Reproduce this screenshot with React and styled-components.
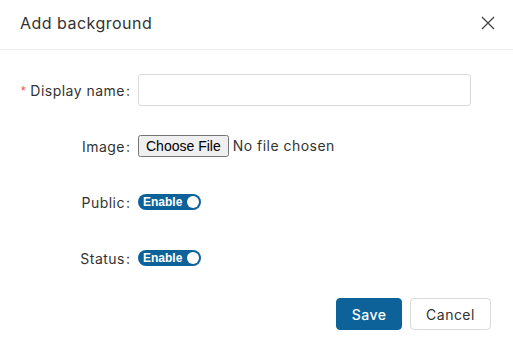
import React from 'react';
import styled, { createGlobalStyle } from 'styled-components';

const GlobalStyle = createGlobalStyle`
  html, body {
    margin: 0;
    padding: 0;
    background: #fff;
  }
  body {
    font-family: Inter, "Open Sans", sans-serif;
    letter-spacing: 0.03em;
    color: #333;
  }
`;

const Modal = styled.div`
  width: 513px;
  height: 361px;
  background: #fff;
  display: flex;
  flex-direction: column;
`;

const Header = styled.div`
  height: 50px;
  box-sizing: border-box;
  border-bottom: 1px solid #eeeeee;
  display: flex;
  align-items: center;
  justify-content: space-between;
  padding: 0 16px 4px 20px;
`;

const Title = styled.div`
  font-size: 16px;
  color: #333;
`;

const CloseButton = styled.button`
  border: 0;
  background: none;
  padding: 0;
  width: 18px;
  height: 18px;
  display: flex;
  align-items: center;
  justify-content: center;
  cursor: pointer;
  color: #444;
`;

const Body = styled.div`
  padding: 24px 0 0 0;
  display: flex;
  flex-direction: column;
  gap: 24px;
`;

const Row = styled.div`
  display: flex;
  align-items: center;
  height: 32px;
`;

const Label = styled.label`
  width: 130px;
  box-sizing: border-box;
  display: flex;
  justify-content: flex-end;
  align-items: center;
  font-size: 14px;
  color: #333;
`;

const Required = styled.span`
  color: #ff4d4f;
  font-size: 13px;
  margin-right: 4px;
  font-family: SimSun, sans-serif;
`;

const Colon = styled.span`
  margin-left: 1px;
  letter-spacing: 0;
`;

const TextInput = styled.input`
  width: 333px;
  height: 32px;
  box-sizing: border-box;
  border: 1px solid #d9d9d9;
  border-radius: 3px;
  margin-left: 8px;
  padding: 4px 11px;
  font: inherit;
  font-size: 14px;
  outline: none;
`;

const FileInput = styled.input`
  margin-left: 8px;
  font-family: inherit;
  letter-spacing: inherit;
  font-size: 14px;
  color: #333;
`;

const Switch = styled.button`
  margin-left: 8px;
  height: 16px;
  width: 63px;
  border: 0;
  border-radius: 8px;
  background: ${({ checked }) => (checked ? '#0d6399' : '#bfbfbf')};
  display: flex;
  align-items: center;
  justify-content: space-between;
  padding: 0 2px 0 5px;
  box-sizing: border-box;
  cursor: pointer;
`;

const SwitchText = styled.span`
  color: #fff;
  font-family: inherit;
  font-size: 12px;
  font-weight: 600;
  letter-spacing: 0;
  line-height: 16px;
`;

const Knob = styled.span`
  width: 12px;
  height: 12px;
  border-radius: 50%;
  background: #fff;
`;

const Footer = styled.div`
  display: flex;
  justify-content: flex-end;
  gap: 8px;
  padding: 0 22px 0 0;
`;

const Button = styled.button`
  height: 32px;
  padding: 0;
  border-radius: 4px;
  font-family: inherit;
  letter-spacing: inherit;
  font-size: 14px;
  font-weight: ${({ primary }) => (primary ? 500 : 400)};
  cursor: pointer;
  border: 1px solid ${({ primary }) => (primary ? '#0d6399' : '#d9d9d9')};
  background: ${({ primary }) => (primary ? '#0d6399' : '#fff')};
  color: ${({ primary }) => (primary ? '#fff' : '#333')};
  width: ${({ primary }) => (primary ? '66px' : '81px')};
`;

const ToggleField = ({ label }) => (
  <Row>
    <Label>{label}<Colon>:</Colon></Label>
    <Switch checked>
      <SwitchText>Enable</SwitchText>
      <Knob />
    </Switch>
  </Row>
);

const App = () => {
  return (
    <Modal>
      <GlobalStyle />
      <Header>
        <Title>Add background</Title>
        <CloseButton aria-label="Close">
          <svg width="14" height="14" viewBox="0 0 14 14">
            <path d="M1 1 L13 13 M13 1 L1 13" stroke="#444" strokeWidth="1.3" fill="none" />
          </svg>
        </CloseButton>
      </Header>
      <Body>
        <Row>
          <Label><Required>*</Required>Display name<Colon>:</Colon></Label>
          <TextInput type="text" />
        </Row>
        <Row>
          <Label>Image<Colon>:</Colon></Label>
          <FileInput type="file" />
        </Row>
        <ToggleField label="Public" />
        <ToggleField label="Status" />
        <Footer>
          <Button primary>Save</Button>
          <Button>Cancel</Button>
        </Footer>
      </Body>
    </Modal>
  );
};

export default App;
